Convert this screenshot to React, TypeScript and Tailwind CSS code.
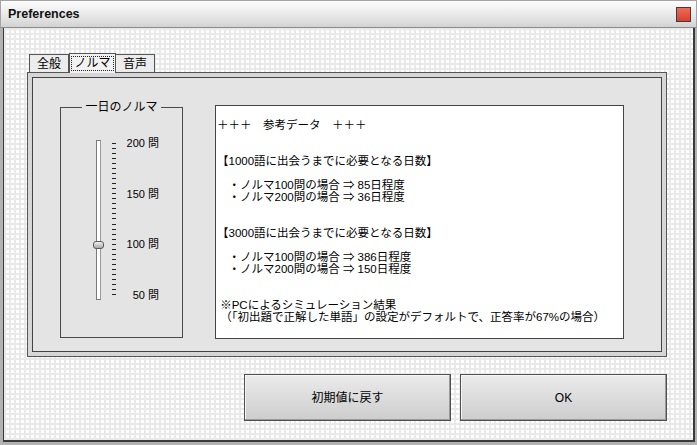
import React from 'react';

const ticks = Array.from({ length: 31 }, (_, i) => i);
const levels = ['200 問', '150 問', '100 問', '50 問'];

const lines = [
  '＋＋＋　参考データ　＋＋＋',
  '',
  '',
  '【1000語に出会うまでに必要となる日数】',
  '',
  '　・ノルマ100問の場合 ⇒ 85日程度',
  '　・ノルマ200問の場合 ⇒ 36日程度',
  '',
  '',
  '【3000語に出会うまでに必要となる日数】',
  '',
  '　・ノルマ100問の場合 ⇒ 386日程度',
  '　・ノルマ200問の場合 ⇒ 150日程度',
  '',
  '',
  ' ※PCによるシミュレーション結果',
  ' （「初出題で正解した単語」の設定がデフォルトで、正答率が67%の場合）',
];

const TitleBar: React.FC = () => (
  <div className="h-[28px] shrink-0 flex items-center justify-between pl-[7px] pr-[5px] border border-b-[#8c8c8c] border-[#a4a4a4] bg-[linear-gradient(#fdfdfd,#e6e6e6_60%,#d2d2d2)]">
    <span className="font-['Liberation_Sans',sans-serif] font-bold text-[12.5px] text-[#111]">Preferences</span>
    <div className="w-[15px] h-[15px] border border-[#3c3c3c] bg-[linear-gradient(#f26a58,#d9402f)]" />
  </div>
);

const Tabs: React.FC = () => (
  <div className="relative z-10 flex items-end h-[19px] pl-[2px] text-[12px]">
    <div className="w-[40px] h-[18px] border border-b-0 border-[#555] bg-[#ececec] flex items-center justify-center pt-[1px]">全般</div>
    <div className="w-[47px] h-[20px] -mb-px border border-b-0 border-[#555] bg-[#f2f2f2] flex items-center justify-center">
      <span className="border border-dotted border-[#222] px-[2px] leading-[13px]">ノルマ</span>
    </div>
    <div className="w-[39px] h-[18px] border border-b-0 border-l-0 border-[#555] bg-[#ececec] flex items-center justify-center pt-[1px]">音声</div>
  </div>
);

const QuotaSlider: React.FC = () => (
  <fieldset className="w-[123px] h-[237px] mt-[23px] border border-[#4a4a4a] shrink-0">
    <legend className="mx-auto px-[3px] text-[12px] leading-[12px]">一日のノルマ</legend>
    <div className="flex items-start pl-[35px]">
      {/* track + thumb */}
      <div className="relative mt-[27px] w-[5px] h-[160px] border border-[#7a7a7a] border-r-[#9a9a9a] bg-white">
        <div className="absolute top-[100px] left-[-4px] w-[11px] h-[8px] rounded-[3px] border border-[#5a5a5a] bg-[linear-gradient(#f0f0f0,#a8a8a8)]" />
      </div>
      <div className="ml-[11px] mt-[30px] h-[152px] flex flex-col justify-between">
        {ticks.map(i => (
          <div key={i} className="w-[4px] h-px bg-[#222]" />
        ))}
      </div>
      <div className="ml-[10px] mt-[24px] w-[33px] h-[164px] flex flex-col justify-between text-right text-[11px] leading-[12px] whitespace-pre">
        {levels.map(l => (
          <div key={l}>{l}</div>
        ))}
      </div>
    </div>
  </fieldset>
);

const ReferenceText: React.FC = () => (
  <div className="ml-[32px] mt-[27px] w-[409px] h-[234px] border border-[#444] bg-white pt-[13px] pl-[1px] text-[11.5px] leading-[12px] whitespace-pre">
    {lines.map((t, i) => (
      <div key={i} className="h-[12px]">{t}</div>
    ))}
  </div>
);

export default function App() {
  return (
    <div className="w-[697px] h-[445px] flex flex-col overflow-hidden bg-[#b2b2b2] text-black font-['Liberation_Sans','Noto_Sans_CJK_JP',sans-serif]">
      <TitleBar />
      <div className="flex-1 ml-[3px] mr-[2px] mb-[3px] border-l border-r-2 border-b-2 border-[#3a3a3a] bg-white [background-image:linear-gradient(#e9e9e9_2px,transparent_2px),linear-gradient(90deg,#e9e9e9_2px,transparent_2px)] [background-size:5px_5px] pl-[23px] pt-[25px]">
        <Tabs />

        {/* tab panel */}
        <div className="w-[640px] h-[285px] border border-[#555] bg-[#d6d6d6] p-[4px]">
          <div className="w-full h-full border border-[#444] bg-[#e4e4e4] flex items-start pl-[27px]">
            <QuotaSlider />
            <ReferenceText />
          </div>
        </div>

        {/* buttons */}
        <div className="w-[640px] mt-[17px] flex justify-end gap-[9px] text-[12px]">
          <button className="w-[207px] h-[47px] border border-[#4f4f4f] bg-[linear-gradient(#ebebeb,#cdcdcd)] shadow-[inset_-1px_-1px_0_#9a9a9a,inset_1px_1px_0_#f6f6f6]">
            初期値に戻す
          </button>
          <button className="w-[207px] h-[47px] border border-[#4f4f4f] bg-[linear-gradient(#ebebeb,#cdcdcd)] shadow-[inset_-1px_-1px_0_#9a9a9a,inset_1px_1px_0_#f6f6f6]">
            OK
          </button>
        </div>
      </div>
    </div>
  );
}
